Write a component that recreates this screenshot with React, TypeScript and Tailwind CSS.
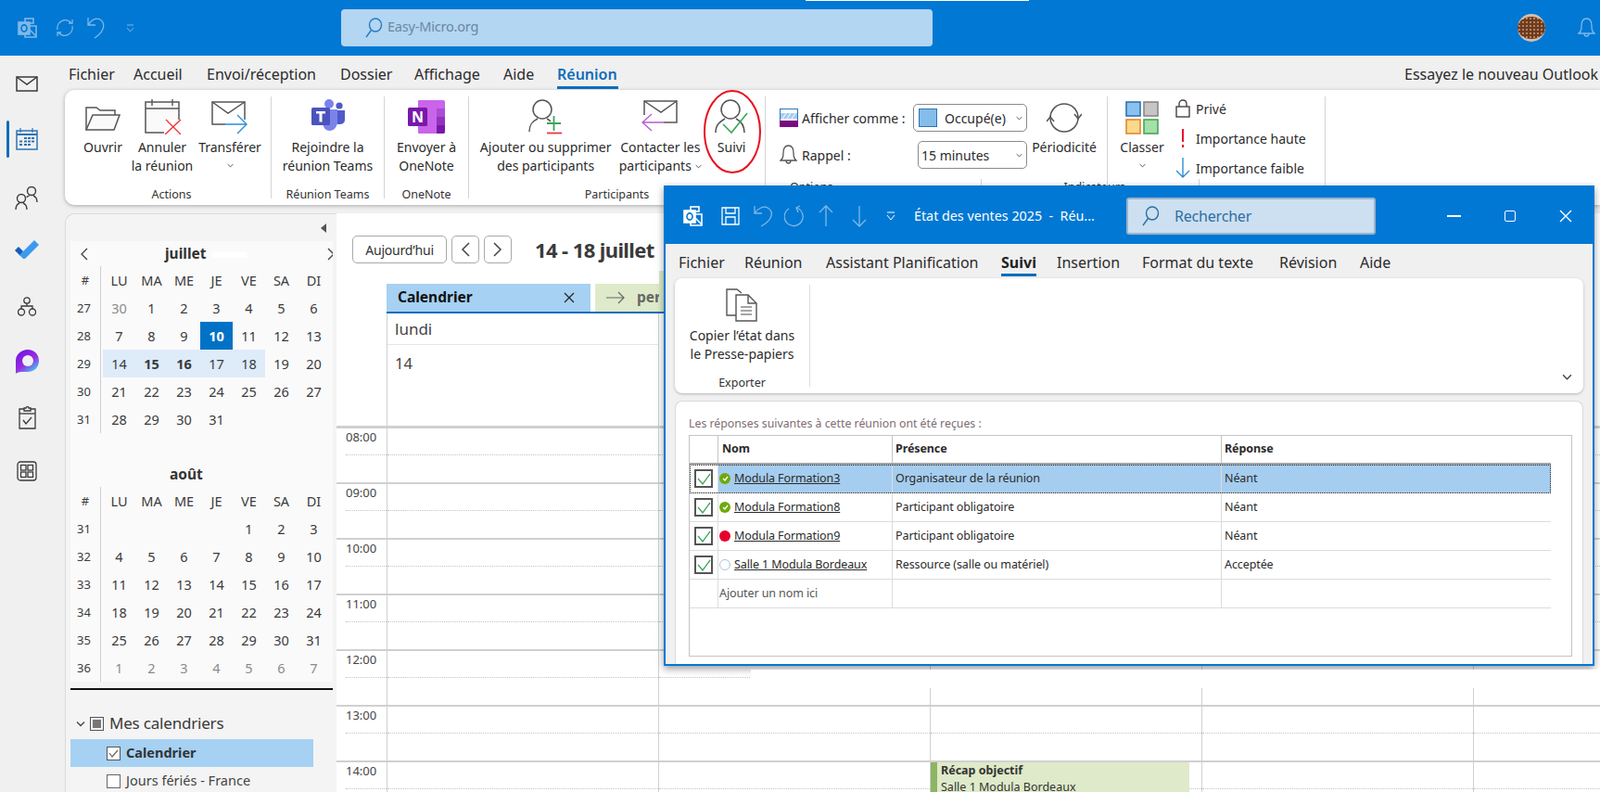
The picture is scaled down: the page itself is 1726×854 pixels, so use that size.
import React from "react";

const S = "#555";

function Chev({ className = "", color = "#444" }: { className?: string; color?: string }) {
  return (
    <svg viewBox="0 0 10 6" className={className} fill="none" stroke={color} strokeWidth="1.3">
      <path d="M1 1 L5 5 L9 1" />
    </svg>
  );
}

function OutlookMini({ color }: { color: string }) {
  return (
    <svg width="22" height="22" viewBox="0 0 22 22" fill="none" stroke={color} strokeWidth="1.6">
      <rect x="8" y="1" width="9" height="5" />
      <rect x="1" y="5" width="12" height="13" fill={color} />
      <ellipse cx="7" cy="11.5" rx="3" ry="3.6" stroke="#0078d4" strokeWidth="1.6" fill="none" />
      <path d="M13 9 L20 9 L20 21 L8 21 L8 18" />
      <path d="M13 13 L20 20" />
    </svg>
  );
}

function SearchIcon({ color }: { color: string }) {
  return (
    <svg width="20" height="22" viewBox="0 0 20 22" fill="none" stroke={color} strokeWidth="1.4">
      <ellipse cx="12" cy="8" rx="6.5" ry="7" />
      <path d="M7.5 13.5 L2 21" />
    </svg>
  );
}

function Folder() {
  return (
    <svg width="38" height="26" viewBox="0 0 38 26" fill="none" stroke={S} strokeWidth="1.5">
      <path d="M1 25 V1 H12 L16 4 H32 V9" />
      <path d="M1 25 L8 9 H37 L31 25 Z" fill="#fafafa" />
    </svg>
  );
}

function CancelCal() {
  return (
    <svg width="40" height="38" viewBox="0 0 40 38" fill="none">
      <rect x="2" y="3" width="36" height="33" stroke={S} strokeWidth="1.5" fill="#fafafa" />
      <path d="M2 10 H38 M9 0 V7 M31 0 V7" stroke={S} strokeWidth="1.4" />
      <rect x="22" y="22" width="18" height="16" fill="#fff" />
      <path d="M23 38 L40 22 M24 22 L40 38" stroke="#f0343a" strokeWidth="1.4" />
    </svg>
  );
}

function ForwardMail() {
  return (
    <svg width="40" height="36" viewBox="0 0 40 36" fill="none">
      <path d="M15 25 H1 V1 H36 V20" stroke={S} strokeWidth="1.5" />
      <path d="M1 1 L18 13 L36 1" stroke={S} strokeWidth="1.5" />
      <path d="M15 25 H38 M28 15 L38 25 L28 35" stroke="#2a8ed8" strokeWidth="1.4" />
    </svg>
  );
}

function Teams() {
  return (
    <svg width="36" height="34" viewBox="0 0 36 34">
      <circle cx="19" cy="5" r="5" fill="#7b83eb" />
      <circle cx="30" cy="7" r="3.6" fill="#5059c9" />
      <path d="M24 12 H36 V22 C36 26 33 27 30 27 C27 27 24 26 24 22 Z" fill="#5059c9" />
      <path d="M12 11 H28 V24 C28 30 24 34 19.500 34 C15 34 12 30 12 24 Z" fill="#7b83eb" />
      <rect x="0" y="9" width="20" height="19" rx="1.500" fill="#4b53bc" />
      <path d="M5 13 H15 V15.500 H11.500 V24.500 H8.500 V15.500 H5 Z" fill="#fff" />
    </svg>
  );
}

function OneNote() {
  return (
    <svg width="40" height="36" viewBox="0 0 40 36">
      <path d="M11 1 Q11 0 12 0 H38 Q40 0 40 2 V34 Q40 36 38 36 H12 Q11 36 11 35 Z" fill="#ca64ea" />
      <rect x="31" y="9" width="9" height="9" fill="#ae4bd5" />
      <rect x="31" y="18" width="9" height="9" fill="#9332bf" />
      <path d="M31 27 H40 V34 Q40 36 38 36 H31 Z" fill="#7719aa" />
      <rect x="0" y="8" width="21" height="20" rx="1.500" fill="#7719aa" />
      <text x="10.500" y="24" textAnchor="middle" fontFamily="Open Sans" fontWeight="700" fontSize="16" fill="#fff">N</text>
    </svg>
  );
}

function PersonPlus() {
  return (
    <svg width="38" height="38" viewBox="0 0 38 38" fill="none">
      <circle cx="15" cy="11" r="10" stroke={S} strokeWidth="1.5" />
      <path d="M1 35 C1 26 6 23 10 21 M20 21 C22 22 23 23 24 24" stroke={S} strokeWidth="1.5" />
      <path d="M20 26 H35 M27.500 18 V34" stroke="#3aa655" strokeWidth="1.8" />
      <path d="M20 36.500 H36" stroke="#f0343a" strokeWidth="1.8" />
    </svg>
  );
}

function BackMail() {
  return (
    <svg width="40" height="34" viewBox="0 0 40 34" fill="none">
      <path d="M3 16 V1 H38 V24 H24" stroke={S} strokeWidth="1.5" />
      <path d="M3 1 L21 13 L38 1" stroke={S} strokeWidth="1.5" />
      <path d="M24 24 H2 M11 15 L1 24 L11 33" stroke="#b45fd0" strokeWidth="1.4" />
    </svg>
  );
}

function PersonCheck() {
  return (
    <svg width="38" height="38" viewBox="0 0 38 38" fill="none">
      <circle cx="18" cy="11" r="10" stroke={S} strokeWidth="1.5" />
      <path d="M2 36 C2 27 7 24 12 21 M24 21 C30 24 33 28 33 36" stroke={S} strokeWidth="1.5" />
      <path d="M10 27 L19 36 L36 15" stroke="#3aa655" strokeWidth="1.6" />
    </svg>
  );
}

function BarIcon() {
  return (
    <svg width="20" height="20" viewBox="0 0 20 20">
      <rect x="0.500" y="0.500" width="19" height="19" fill="#fff" stroke="#2e74b5" />
      <rect x="1" y="5" width="18" height="6" fill="#a6cdee" />
      <path d="M3 11 L7 5 M8 11 L12 5 M13 11 L17 5" stroke="#fff" />
      <rect x="0" y="13" width="20" height="7" fill="#7b0a82" />
    </svg>
  );
}

function Bell({ color = S }: { color?: string }) {
  return (
    <svg width="19" height="22" viewBox="0 0 19 22" fill="none" stroke={color} strokeWidth="1.3">
      <path d="M1 17 C3 15 4 14 4 9 C4 4 6 1 9.500 1 C13 1 15 4 15 9 C15 14 16 15 18 17 Z" />
      <path d="M7 17 C7 21 12 21 12 17" />
    </svg>
  );
}

function Recur() {
  return (
    <svg width="38" height="34" viewBox="0 0 38 34" fill="none" stroke={S} strokeWidth="1.5">
      <path d="M4 17 A15 15 0 0 1 34 17" />
      <path d="M34 17 A15 15 0 0 1 4 17" />
      <path d="M0 21 L4 16 L8 21" />
      <path d="M30 13 L34 18 L38 13" />
    </svg>
  );
}

function Classify() {
  return (
    <svg width="36" height="36" viewBox="0 0 36 36">
      <rect x="1" y="1" width="15" height="15" fill="#8cc1ee" stroke="#2e74b5" strokeWidth="1.6" />
      <rect x="20" y="1" width="15" height="15" fill="#c8c6c4" stroke="#8a8886" strokeWidth="1.6" />
      <rect x="1" y="20" width="15" height="15" fill="#fbd98b" stroke="#e3872a" strokeWidth="1.6" />
      <rect x="20" y="20" width="15" height="15" fill="#a4e0a8" stroke="#4ca35a" strokeWidth="1.6" />
    </svg>
  );
}

function Lock() {
  return (
    <svg width="16" height="20" viewBox="0 0 16 20" fill="none" stroke="#444" strokeWidth="1.4">
      <rect x="1" y="8" width="14" height="11" />
      <path d="M4 8 V5 C4 -0.300 12 -0.300 12 5 V8" />
    </svg>
  );
}

function Exclaim() {
  return (
    <svg width="4" height="20" viewBox="0 0 4 20">
      <rect x="1" y="0" width="2" height="14" fill="#e8112d" />
      <rect x="1" y="17" width="2" height="3" fill="#e8112d" />
    </svg>
  );
}

function DownArrow() {
  return (
    <svg width="16" height="22" viewBox="0 0 16 22" fill="none" stroke="#2a8ed8" strokeWidth="1.4">
      <path d="M8 0 V21 M1 14 L8 21 L15 14" />
    </svg>
  );
}

function CopyDoc() {
  return (
    <svg width="36" height="36" viewBox="0 0 36 36" fill="none" stroke={S} strokeWidth="1.4">
      <path d="M11 29 H1 V1 H12 L17 5" />
      <path d="M11 7 H24 L33 16 V35 H11 Z" fill="#fff" />
      <path d="M24 7 V16 H33" />
      <path d="M16 20 H28 M16 24 H28 M16 28 H28" stroke="#888" />
    </svg>
  );
}

function MailRail() {
  return (
    <svg width="24" height="17" viewBox="0 0 24 17" fill="none" stroke="#3a3a3a" strokeWidth="1.500">
      <rect x="1" y="1" width="22" height="15" />
      <path d="M1 1 L12 9 L23 1" />
    </svg>
  );
}

function CalRail() {
  return (
    <svg width="24" height="24" viewBox="0 0 24 24" fill="none">
      <rect x="1" y="3" width="22" height="20" stroke="#2e74b5" strokeWidth="1.500" fill="#f0f0f0" />
      <path d="M1 7 H23" stroke="#2e74b5" strokeWidth="2" />
      <path d="M5 0 V5 M18 0 V5" stroke="#2e74b5" strokeWidth="1.200" />
      <path d="M9 10 h3 v2 h-3 z M13 10 h3 v2 h-3 z M17 10 h3 v2 h-3 z M4 13.500 h3 v2 h-3 z M9 13.500 h3 v2 h-3 z M13 13.500 h3 v2 h-3 z M17 13.500 h3 v2 h-3 z M4 17 h3 v2 h-3 z M9 17 h3 v2 h-3 z M13 17 h3 v2 h-3 z" fill="#2e74b5" />
    </svg>
  );
}

function PeopleRail() {
  return (
    <svg width="26" height="25" viewBox="0 0 26 25" fill="none" stroke="#3a3a3a" strokeWidth="1.400">
      <circle cx="7" cy="13" r="4.500" />
      <path d="M1 25 C1 20 3 19 5 18 M9 18 C11 19 13 20 13 25" />
      <circle cx="18" cy="5" r="4.500" />
      <path d="M13 12 C13 11 14 11 15.500 10 M20 10 C22 11 24 12 24 17" />
    </svg>
  );
}

function TodoRail() {
  return (
    <svg width="26" height="20" viewBox="0 0 26 20">
      <path d="M0 11 L4 7 L9 12 L6 17 Z" fill="#185abd" />
      <path d="M5 16 L21 0 L26 5 L11 20 L9 20 Z" fill="#3b9af0" />
    </svg>
  );
}

function OrgRail() {
  return (
    <svg width="20" height="21" viewBox="0 0 20 21" fill="none" stroke="#3a3a3a" strokeWidth="1.300">
      <circle cx="10" cy="4" r="3.200" />
      <circle cx="4" cy="16.500" r="3.500" />
      <circle cx="16" cy="16.500" r="3.500" />
      <path d="M10 7 V10 M4 13 V10 H16 V13" />
    </svg>
  );
}

function LoopRail() {
  return (
    <svg width="25" height="26" viewBox="0 0 25 26">
      <defs>
        <linearGradient id="lg" x1="0" y1="0" x2="0.700" y2="1">
          <stop offset="0" stopColor="#6a0fe0" />
          <stop offset="0.6" stopColor="#9a2be2" />
          <stop offset="1" stopColor="#3dd0f5" />
        </linearGradient>
      </defs>
      <path d="M0 26 V12 C0 5 6 0 13 0 C20 0 25 5 25 12 C25 19 20 24 13 24 H6 C3 24 1 25 0 26 Z" fill="url(#lg)" />
      <circle cx="13" cy="12" r="6" fill="#f0f0f0" />
    </svg>
  );
}

function ClipRail() {
  return (
    <svg width="19" height="25" viewBox="0 0 19 25" fill="none" stroke="#3a3a3a" strokeWidth="1.300">
      <path d="M6 3 H1 V24 H18 V3 H13" />
      <path d="M6 5 V2 H8 C8 0 11 0 11 2 H13 V5 H6 Z" />
      <path d="M1 8 H18" />
      <path d="M5 15 L8 19 L14 12" />
    </svg>
  );
}

function AppsRail() {
  return (
    <svg width="22" height="22" viewBox="0 0 22 22" fill="none" stroke="#3a3a3a" strokeWidth="1.300">
      <rect x="1" y="1" width="20" height="20" rx="3" />
      <rect x="4.500" y="4.500" width="5.500" height="5.500" />
      <rect x="12" y="4.500" width="5.500" height="5.500" />
      <rect x="4.500" y="12" width="5.500" height="5.500" />
      <rect x="12" y="12" width="5.500" height="5.500" />
    </svg>
  );
}

function RibbonBtn({ w, icon, lines }: { w: string; icon: React.ReactNode; lines: string[] }) {
  return (
    <div className={`flex flex-col items-center ${w}`}>
      <div className="h-[41px] flex items-end justify-center">{icon}</div>
      <div className="mt-[4px] text-center leading-[20px] whitespace-nowrap">
        {lines.map((l) => (
          <div key={l}>{l}</div>
        ))}
      </div>
    </div>
  );
}

function Group({ w, label, children }: { w: string; label: React.ReactNode; children: React.ReactNode }) {
  return (
    <div className={`flex flex-col border-r border-[#d4d4d4] h-[110px] ${w}`}>
      <div className="flex-1 flex">{children}</div>
      {label}
    </div>
  );
}

function GLabel({ t }: { t: string }) {
  return <div className="h-[18px] leading-[18px] text-center text-[12.5px] text-[#333] -mb-[5px]">{t}</div>;
}

function Select({ w, children }: { w: string; children: React.ReactNode }) {
  return (
    <div className={`${w} h-[30px] flex items-center border border-[#8a8a8a] rounded-[5px] bg-white pl-[3px] pr-[4px]`}>
      {children}
      <Chev className="w-[7px] h-[5px] ml-auto" />
    </div>
  );
}

function Ribbon() {
  return (
    <div className="h-[124px] bg-white rounded-l-[10px] shadow-[0_1px_4px_rgba(0,0,0,0.3)] flex py-[7px] pl-[8px] text-[14px] text-[#2b2b2b]">
      <Group w="w-[215px]" label={<GLabel t="Actions" />}>
        <RibbonBtn w="w-[66px]" icon={<div className="pb-[4px]"><Folder /></div>} lines={["Ouvrir"]} />
        <RibbonBtn w="w-[62px]" icon={<CancelCal />} lines={["Annuler", "la réunion"]} />
        <div className="flex flex-col items-center w-[84px]">
          <div className="h-[41px] flex items-end justify-center"><ForwardMail /></div>
          <div className="mt-[4px] leading-[20px]">Transférer</div>
          <Chev className="w-[7px] h-[5px] mt-[7px]" />
        </div>
      </Group>
      <Group w="w-[122px]" label={<GLabel t="Réunion Teams" />}>
        <RibbonBtn w="w-full" icon={<div className="pb-[4px]"><Teams /></div>} lines={["Rejoindre la", "réunion Teams"]} />
      </Group>
      <Group w="w-[91px]" label={<GLabel t="OneNote" />}>
        <RibbonBtn w="w-full" icon={<div className="pb-[1px]"><OneNote /></div>} lines={["Envoyer à", "OneNote"]} />
      </Group>
      <Group w="w-[320px]" label={<GLabel t="Participants" />}>
        <RibbonBtn w="w-[166px]" icon={<PersonPlus />} lines={["Ajouter ou supprimer", "des participants"]} />
        <div className="flex flex-col items-center w-[82px]">
          <div className="h-[41px] flex items-end justify-center pb-[3px]"><BackMail /></div>
          <div className="mt-[4px] leading-[20px] whitespace-nowrap">Contacter les</div>
          <div className="leading-[20px] whitespace-nowrap flex items-center gap-[4px]">participants<Chev className="w-[7px] h-[5px]" /></div>
        </div>
        <RibbonBtn w="w-[72px]" icon={<PersonCheck />} lines={["Suivi"]} />
      </Group>
      <Group
        w="w-[369px]"
        label={
          <div className="h-[18px] mb-[3px] leading-[18px] text-[12.5px] text-[#333] flex pl-[26px]">
            <span>Options</span>
            <span className="ml-[249px]">Indicateurs</span>
          </div>
        }
      >
        <div className="w-[283px] pl-[15px] pt-[8px] flex flex-col gap-[10px]">
          <div className="flex items-center h-[30px]">
            <BarIcon />
            <span className="w-[124px] pl-[4px] whitespace-nowrap">Afficher comme :</span>
            <Select w="w-[123px]">
              <span className="w-[20px] h-[20px] bg-[#84bdea] border border-[#2e74b5] ml-[2px] mr-[8px]" />
              Occupé(e)
            </Select>
          </div>
          <div className="flex items-center h-[30px]">
            <Bell />
            <span className="w-[130px] pl-[5px]">Rappel :</span>
            <Select w="w-[118px]">15 minutes</Select>
          </div>
        </div>
        <div className="w-[78px] flex flex-col items-center">
          <div className="h-[41px] flex items-end justify-center pb-[1px]"><Recur /></div>
          <div className="mt-[4px] leading-[20px]">Périodicité</div>
        </div>
      </Group>
      <Group w="w-[235px]" label={null}>
        <div className="w-[74px] flex flex-col items-center">
          <div className="h-[41px] flex items-end justify-center"><Classify /></div>
          <div className="mt-[4px] leading-[20px]">Classer</div>
          <Chev className="w-[7px] h-[5px] mt-[7px]" />
        </div>
        <div className="-mt-[3px] -ml-[7px] flex flex-col">
          {[
            { t: "Privé", i: <Lock /> },
            { t: "Importance haute", i: <Exclaim /> },
            { t: "Importance faible", i: <DownArrow /> },
          ].map((r) => (
            <div key={r.t} className="h-[32px] flex items-center">
              <span className="w-[28px] flex justify-center">{r.i}</span>
              <span className="whitespace-nowrap">{r.t}</span>
            </div>
          ))}
        </div>
      </Group>
    </div>
  );
}

type Week = { n: number; days: { t: string; cls?: string }[] };

const w = (n: number, list: (number | null)[], muted: number[] = []): Week => ({
  n,
  days: list.map((d, i) => ({ t: d === null ? "" : String(d), cls: muted.includes(i) ? "text-[#8a8a8a]" : "" })),
});

const JUL: Week[] = [
  w(27, [30, 1, 2, 3, 4, 5, 6], [0]),
  {
    n: 28,
    days: [
      { t: "7" }, { t: "8" }, { t: "9" },
      { t: "10", cls: "bg-[#0072c6] text-white font-bold" },
      { t: "11" }, { t: "12" }, { t: "13" },
    ],
  },
  {
    n: 29,
    days: [
      { t: "14", cls: "bg-[#deebf9]" },
      { t: "15", cls: "bg-[#deebf9] font-bold" },
      { t: "16", cls: "bg-[#deebf9] font-bold" },
      { t: "17", cls: "bg-[#deebf9]" },
      { t: "18", cls: "bg-[#deebf9]" },
      { t: "19" }, { t: "20" },
    ],
  },
  w(30, [21, 22, 23, 24, 25, 26, 27]),
  w(31, [28, 29, 30, 31, null, null, null]),
];

const AUG: Week[] = [
  w(31, [null, null, null, null, 1, 2, 3]),
  w(32, [4, 5, 6, 7, 8, 9, 10]),
  w(33, [11, 12, 13, 14, 15, 16, 17]),
  w(34, [18, 19, 20, 21, 22, 23, 24]),
  w(35, [25, 26, 27, 28, 29, 30, 31]),
  w(36, [1, 2, 3, 4, 5, 6, 7], [0, 1, 2, 3, 4, 5, 6]),
];

function Month({ weeks }: { weeks: Week[] }) {
  return (
    <div className="flex text-[14.5px] text-[#3b3b3b]">
      <div className="w-[33px] border-r border-[#cfcfcf] text-[13px]">
        <div className="h-[30px] pt-[1px] flex items-center justify-center">#</div>
        {weeks.map((k) => (
          <div key={k.n} className="h-[30px] pt-[2px] flex items-center justify-center pr-[3px]">{k.n}</div>
        ))}
      </div>
      <div className="ml-[2px]">
        <div className="flex h-[30px]">
          {["LU", "MA", "ME", "JE", "VE", "SA", "DI"].map((d) => (
            <div key={d} className="w-[35px] pt-[1px] flex items-center justify-center">{d}</div>
          ))}
        </div>
        {weeks.map((k) => (
          <div key={k.n} className="flex h-[30px]">
            {k.days.map((d, i) => (
              <div key={i} className={`w-[35px] pt-[1px] flex items-center justify-center ${d.cls ?? ""}`}>{d.t}</div>
            ))}
          </div>
        ))}
      </div>
    </div>
  );
}

function Sidebar() {
  return (
    <div className="w-[293px] shrink-0 bg-[#f4f4f4] border-l border-t border-[#dadada] rounded-tl-[10px] pl-[5px] pr-[4px] relative">
      <div className="h-[29px] flex justify-end items-center pr-[7px]">
        <svg width="6" height="10" viewBox="0 0 6 10"><path d="M6 0 V10 L0 5 Z" fill="#555" /></svg>
      </div>
      <div className="bg-[#fafafa] h-[475px] overflow-hidden">
        <div className="h-[27px] pt-[1px] flex items-center relative">
          <svg width="9" height="14" viewBox="0 0 9 14" fill="none" stroke="#444" strokeWidth="1.400" className="absolute left-[10px] top-[7px]"><path d="M8 1 L2 7 L8 13" /></svg>
          <span className="ml-[102px] font-bold text-[15.5px] text-[#333]">juillet</span>
          <span className="ml-[6px] w-[38px] h-[7px] bg-white blur-[1px]" />
          <svg width="9" height="14" viewBox="0 0 9 14" fill="none" stroke="#444" strokeWidth="1.400" className="absolute left-[277px] top-[7px]"><path d="M1 1 L7 7 L1 13" /></svg>
        </div>
        <Month weeks={JUL} />
        <div className="h-[58px] pt-[30px] pl-[107px] font-bold text-[15.5px] text-[#333] leading-[28px]">août</div>
        <Month weeks={AUG} />
      </div>
      <div className="mt-[7px] h-[2px] bg-[#111]" />
      <div className="mt-[21px] h-[30px] flex items-center text-[17px] text-[#3a3a3a] tracking-[-0.2px]">
        <Chev className="w-[10px] h-[7px] ml-[6px]" />
        <span className="w-[15px] h-[15px] border border-[#555] ml-[5px] mr-[6px] flex items-center justify-center">
          <span className="w-[9px] h-[9px] bg-[#777]" />
        </span>
        Mes calendriers
      </div>
      <div className="mt-[2px] w-[262px] h-[30px] bg-[#a6d1f3] flex items-center pl-[39px] text-[14.5px] font-bold text-[#333]">
        <span className="w-[15px] h-[15px] border border-[#555] bg-white mr-[6px] flex items-center justify-center">
          <svg width="11" height="9" viewBox="0 0 11 9" fill="none" stroke="#666" strokeWidth="1.200"><path d="M1 4 L4 8 L10 1" /></svg>
        </span>
        Calendrier
      </div>
      <div className="h-[30px] flex items-center pl-[39px] text-[14.5px] text-[#444]">
        <span className="w-[15px] h-[15px] border border-[#666] bg-white mr-[6px]" />
        Jours fériés - France
      </div>
    </div>
  );
}

function Nav({ children, w: wc }: { children: React.ReactNode; w: string }) {
  return (
    <div className={`${wc} h-[30px] border border-[#a9a9a9] rounded-[5px] flex items-center justify-center text-[14px] text-[#333] tracking-[-0.2px]`}>
      {children}
    </div>
  );
}

function HourRow({ t, children }: { t: string; children?: React.ReactNode }) {
  return (
    <div className="h-[60px] border-t-2 border-[#d0d0d0] flex relative text-[13px] text-[#444]">
      <div className="w-[54px] shrink-0 pl-[10px] leading-[18px] relative">
        {t}
        <div className="absolute left-[10px] right-0 top-[28px] border-t border-dotted border-[#c4c4c4]" />
      </div>
      {[0, 1, 2, 3, 4].map((i) => (
        <div key={i} className="w-[293px] shrink-0 border-l border-[#d0d0d0] relative">
          <div className="absolute inset-x-0 top-[28px] border-t border-dotted border-[#c4c4c4]" />
          {i === 2 && children}
        </div>
      ))}
    </div>
  );
}

function CalendarView() {
  return (
    <div className="flex-1 bg-white min-w-0 overflow-hidden">
      <div className="h-[76px] pl-[17px] pt-[24px] flex items-start gap-[5px]">
        <Nav w="w-[102px]">Aujourd’hui</Nav>
        <Nav w="w-[30px]"><svg width="10" height="16" viewBox="0 0 10 16" fill="none" stroke="#444" strokeWidth="1.500"><path d="M9 1 L2 8 L9 15" /></svg></Nav>
        <Nav w="w-[30px]"><svg width="10" height="16" viewBox="0 0 10 16" fill="none" stroke="#444" strokeWidth="1.500"><path d="M1 1 L8 8 L1 15" /></svg></Nav>
        <span className="ml-[20px] text-[22px] font-bold text-[#3a3a3a] leading-[30px] tracking-[-0.6px]">14 - 18 juillet</span>
      </div>
      <div className="ml-[54px] flex h-[30px] border-b-2 border-[#0f6cbd] w-[299px] box-content">
        <div className="w-[220px] bg-[#a6d1f3] flex items-center pl-[12px] text-[15.5px] font-bold text-[#111]">
          Calendrier
          <svg width="12" height="12" viewBox="0 0 12 12" fill="none" stroke="#222" strokeWidth="1.200" className="ml-auto mr-[17px]"><path d="M1 1 L11 11 M11 1 L1 11" /></svg>
        </div>
        <div className="ml-[5px] w-[69px] bg-[#deeac9] flex items-center pl-[12px] overflow-hidden text-[15.5px] font-bold text-[#666] whitespace-nowrap">
          <svg width="20" height="14" viewBox="0 0 20 14" fill="none" stroke="#666" strokeWidth="1.200" className="shrink-0 mr-[13px]"><path d="M0 7 H19 M13 1 L19 7 L13 13" /></svg>
          per
        </div>
      </div>
      <div className="ml-[54px] w-[294px] h-[121px] border-x border-[#d0d0d0]">
        <div className="h-[34px] pl-[8px] flex items-center text-[17px] text-[#444] border-b border-[#e6e6e6]">lundi</div>
        <div className="pl-[8px] pt-[8px] text-[16.5px] text-[#444] leading-[24px]">14</div>
      </div>
      <div className="border-t border-[#d0d0d0]">
        <HourRow t="08:00" />
        <HourRow t="09:00" />
        <HourRow t="10:00" />
        <HourRow t="11:00" />
        <HourRow t="12:00" />
        <HourRow t="13:00" />
        <HourRow t="14:00">
          <div className="absolute left-0 top-0 w-[279px] h-[60px] bg-[#deeac9] border-l-[7px] border-[#8db465] pl-[4px] text-[12.5px] leading-[18px] text-[#333]">
            <div className="font-bold">Récap objectif</div>
            <div>Salle 1 Modula Bordeaux</div>
          </div>
        </HourRow>
      </div>
    </div>
  );
}

const GUESTS = [
  { n: "Modula Formation3", p: "Organisateur de la réunion", r: "Néant", s: "ok", sel: true },
  { n: "Modula Formation8", p: "Participant obligatoire", r: "Néant", s: "ok" },
  { n: "Modula Formation9", p: "Participant obligatoire", r: "Néant", s: "busy" },
  { n: "Salle 1 Modula Bordeaux", p: "Ressource (salle ou matériel)", r: "Acceptée", s: "free" },
];

function Status({ s }: { s: string }) {
  if (s === "ok")
    return (
      <span className="w-[12px] h-[12px] rounded-full bg-[#6ea90d] flex items-center justify-center shrink-0">
        <svg width="7" height="6" viewBox="0 0 7 6" fill="none" stroke="#fff" strokeWidth="1.300"><path d="M1 3 L3 5 L6 1" /></svg>
      </span>
    );
  if (s === "busy") return <span className="w-[12px] h-[12px] rounded-full bg-[#e8002a] shrink-0" />;
  return <span className="w-[12px] h-[12px] rounded-full border border-[#a9c5d8] bg-white shrink-0" />;
}

function CheckBox() {
  return (
    <span className="w-[20px] h-[20px] border-2 border-[#555] bg-white flex items-center justify-center">
      <svg width="15" height="13" viewBox="0 0 15 13" fill="none" stroke="#3aa655" strokeWidth="1.300"><path d="M1 6 L6 12 L14 1" /></svg>
    </span>
  );
}

function Dialog() {
  return (
    <div className="absolute left-[716px] top-[200px] w-[1004px] h-[518px] border-2 border-[#0078d4] bg-[#f0f0f0] shadow-[0_3px_8px_rgba(0,0,0,0.4)] flex flex-col overflow-hidden text-[#222]">
      <div className="h-[61px] shrink-0 bg-[#0078d4] flex items-center text-white">
        <div className="ml-[19px]"><OutlookMini color="#fff" /></div>
        <svg width="20" height="20" viewBox="0 0 20 20" fill="none" stroke="#fff" strokeWidth="1.300" className="ml-[19px]">
          <path d="M1 1 H19 V19 H1 Z M5 1 V7 H15 V1 M5 19 V11 H15 V19" />
        </svg>
        <svg width="22" height="24" viewBox="0 0 22 24" fill="none" stroke="#7fb8e8" strokeWidth="1.300" className="ml-[15px]">
          <path d="M1 1 V9 H9 M1 9 C5 3 11 1 15 3 C22 7 21 16 8 23" />
        </svg>
        <svg width="22" height="24" viewBox="0 0 22 24" fill="none" stroke="#7fb8e8" strokeWidth="1.300" className="ml-[11px]">
          <path d="M13 3 A10 10 0 1 1 5 4 M17 1 L13 3 L15 8" />
        </svg>
        <svg width="16" height="24" viewBox="0 0 16 24" fill="none" stroke="#7fb8e8" strokeWidth="1.300" className="ml-[15px]">
          <path d="M8 23 V1 M1 8 L8 1 L15 8" />
        </svg>
        <svg width="16" height="24" viewBox="0 0 16 24" fill="none" stroke="#7fb8e8" strokeWidth="1.300" className="ml-[20px]">
          <path d="M8 1 V23 M1 16 L8 23 L15 16" />
        </svg>
        <svg width="10" height="10" viewBox="0 0 10 10" fill="none" stroke="#fff" className="ml-[21px]">
          <path d="M1 1 H9 M1 4 L5 9 L9 4" />
        </svg>
        <span className="ml-[20px] w-[229px] text-[14.3px] whitespace-pre">État des ventes 2025  -  Réu...</span>
        <div className="w-[269px] h-[40px] bg-[#cce0f2] border-2 border-[#9ab3c9] rounded-[3px] flex items-center pl-[14px]">
          <SearchIcon color="#2d6fa3" />
          <span className="ml-[16px] text-[16px] text-[#2d6fa3] tracking-[-0.2px]">Rechercher</span>
        </div>
        <span className="ml-[77px] w-[15px] h-[2px] bg-white" />
        <span className="ml-[47px] w-[12px] h-[12px] border-[1.5px] border-white rounded-[2px]" />
        <svg width="14" height="14" viewBox="0 0 14 14" fill="none" stroke="#fff" strokeWidth="1.400" className="ml-[47px]">
          <path d="M1 1 L13 13 M13 1 L1 13" />
        </svg>
      </div>
      <div className="h-[37px] pt-[3px] shrink-0 flex items-center pl-[14px] text-[16px] text-[#2b2b2b]">
        {[
          ["Fichier", "w-[71px]"],
          ["Réunion", "w-[88px]"],
          ["Assistant Planification", "w-[189px]"],
        ].map(([t, c]) => (
          <span key={t} className={`${c} whitespace-nowrap`}>{t}</span>
        ))}
        <span className="w-[60px] relative font-bold text-[#222]">
          Suivi
          <span className="absolute left-0 w-[38px] top-[24px] h-[3px] bg-[#0f6cbd]" />
        </span>
        {[
          ["Insertion", "w-[92px]"],
          ["Format du texte", "w-[148px]"],
          ["Révision", "w-[87px]"],
          ["Aide", "w-[40px]"],
        ].map(([t, c]) => (
          <span key={t} className={`${c} whitespace-nowrap`}>{t}</span>
        ))}
      </div>
      <div className="ml-[10px] w-[980px] h-[124px] shrink-0 bg-white rounded-[8px] shadow-[0_1px_3px_rgba(0,0,0,0.25)] flex py-[7px] text-[14px] text-[#2b2b2b]">
        <div className="w-[146px] border-r border-[#dcdcdc] flex flex-col items-center relative pt-[4px]">
          <CopyDoc />
          <div className="mt-[5px] text-center leading-[20px]">
            <div>Copier l’état dans</div>
            <div>le Presse-papiers</div>
          </div>
          <div className="absolute bottom-[-6px] text-[12.5px] text-[#333]">Exporter</div>
        </div>
        <div className="flex-1 flex justify-end items-end pr-[12px] pb-[7px]">
          <Chev className="w-[11px] h-[7px]" />
        </div>
      </div>
      <div className="ml-[10px] mt-[8px] w-[980px] flex-1 bg-white rounded-t-[8px] border-t border-x border-[#dadada] pl-[14px] pt-[15px] text-[12.5px] tracking-[-0.1px]">
        <div className="text-[#7d6d72] text-[12.3px] leading-[18px] tracking-[0]">Les réponses suivantes à cette réunion ont été reçues :</div>
        <div className="mt-[3px] w-[953px] h-[239px] border border-[#c4c4c4] text-[#2b2b2b]">
          <div className="flex h-[31px] border-b-2 border-[#a3a3a3] font-bold w-[929px] items-stretch">
            <div className="w-[31px] border-r border-[#c4c4c4]" />
            <div className="w-[188px] border-r border-[#c4c4c4] pl-[4px] flex items-center">Nom</div>
            <div className="w-[355px] border-r border-[#c4c4c4] pl-[3px] flex items-center">Présence</div>
            <div className="flex-1 pl-[3px] flex items-center">Réponse</div>
          </div>
          {GUESTS.map((g) => (
            <div key={g.n} className={`flex h-[31px] w-[929px] border-b border-[#dcdcdc] ${g.sel ? "outline outline-1 outline-dotted outline-[#222] -outline-offset-1" : ""}`}>
              <div className="w-[31px] border-r border-[#dcdcdc] flex items-center justify-center"><CheckBox /></div>
              <div className={`w-[188px] border-r border-[#dcdcdc] pl-[1px] flex items-center gap-[4px] ${g.sel ? "bg-[#a5cdef]" : ""}`}>
                <Status s={g.s} />
                <span className="underline whitespace-nowrap">{g.n}</span>
              </div>
              <div className={`w-[355px] border-r border-[#dcdcdc] pl-[3px] flex items-center ${g.sel ? "bg-[#a5cdef]" : ""}`}>{g.p}</div>
              <div className={`flex-1 pl-[3px] flex items-center ${g.sel ? "bg-[#a5cdef]" : ""}`}>{g.r}</div>
            </div>
          ))}
          <div className="flex h-[31px] w-[929px] border-b border-[#dcdcdc] text-[#555]">
            <div className="w-[31px] border-r border-[#dcdcdc]" />
            <div className="w-[188px] border-r border-[#dcdcdc] pl-[1px] flex items-center">Ajouter un nom ici</div>
            <div className="w-[355px] border-r border-[#dcdcdc]" />
            <div className="flex-1" />
          </div>
        </div>
      </div>
    </div>
  );
}

export default function App() {
  const font = "[font-family:'Open_Sans','Noto_Sans',sans-serif]";
  return (
    <div className={`relative w-[1726px] h-[854px] overflow-hidden bg-[#f0f0f0] ${font}`}>
      <div className="h-[60px] bg-[#0078d4] flex items-center relative">
        <div className="absolute left-[869px] top-0 w-[241px] h-[1px] bg-white" />
        <div className="ml-[19px]"><OutlookMini color="#7fb8e8" /></div>
        <svg width="22" height="24" viewBox="0 0 22 24" fill="none" stroke="#7fb8e8" strokeWidth="1.300" className="ml-[18px]">
          <path d="M3 14 A8.500 8.500 0 0 1 18 7 M19 10 A8.500 8.500 0 0 1 4 17 M15 7 H19 V3 M7 17 H3 V21" />
        </svg>
        <svg width="20" height="24" viewBox="0 0 20 24" fill="none" stroke="#7fb8e8" strokeWidth="1.300" className="ml-[13px]">
          <path d="M1 1 V9 H9 M1 9 C5 3 10 1 14 3 C20 7 19 16 8 23" />
        </svg>
        <svg width="9" height="9" viewBox="0 0 9 9" fill="none" stroke="#7fb8e8" className="ml-[22px]">
          <path d="M1 1 H8 M1 4 L4.500 8 L8 4" />
        </svg>
        <div className="ml-[223px] w-[638px] h-[40px] rounded-[4px] bg-[#b3d6f2] flex items-center pl-[25px]">
          <SearchIcon color="#2a7cc0" />
          <span className="ml-[5px] -mt-[2px] text-[14.5px] text-[#6a87a3] tracking-[-0.2px]">Easy-Micro.org</span>
        </div>
        <div className="ml-[631px] w-[30px] h-[30px] rounded-full bg-[#6b3b22] bg-[radial-gradient(#b98255_1px,transparent_1.5px)] bg-[length:4px_4px] border-y-[3px] border-[#d4bfae]" />
        <div className="ml-[35px]"><Bell color="#7fb8e8" /></div>
      </div>
      <div className="flex h-[794px]">
        <div className="w-[70px] shrink-0 relative">
          <div className="absolute left-[7px] top-[70px] w-[3px] h-[40px] bg-[#0f6cbd] rounded-full" />
          {[
            { c: "", i: <MailRail /> },
            { c: "", i: <CalRail /> },
            { c: "mt-[3px]", i: <PeopleRail /> },
            { c: "-mt-[4px]", i: <TodoRail /> },
            { c: "mt-[1px]", i: <OrgRail /> },
            { c: "", i: <LoopRail /> },
            { c: "", i: <ClipRail /> },
            { c: "-mt-[2px]", i: <AppsRail /> },
          ].map((r, i) => (
            <div key={i} className={`h-[60px] w-[58px] flex items-center justify-center ${r.c}`}>{r.i}</div>
          ))}
        </div>
        <div className="flex-1 min-w-0 flex flex-col">
          <div className="h-[37px] pt-[3px] shrink-0 flex items-center pl-[4px] text-[16px] text-[#2b2b2b]">
            {[
              ["Fichier", "w-[70px]"],
              ["Accueil", "w-[79px]"],
              ["Envoi/réception", "w-[144px]"],
              ["Dossier", "w-[80px]"],
              ["Affichage", "w-[96px]"],
              ["Aide", "w-[58px]"],
            ].map(([t, c]) => (
              <span key={t} className={`${c} whitespace-nowrap`}>{t}</span>
            ))}
            <span className="relative font-semibold text-[#0f6cbd] w-[66px]">
              Réunion
              <span className="absolute left-0 right-0 top-[25px] h-[3px] bg-[#0f6cbd]" />
            </span>
            <span className="ml-auto w-[211px] whitespace-nowrap">Essayez le nouveau Outlook</span>
          </div>
          <Ribbon />
          <div className="h-[9px] shrink-0" />
          <div className="flex flex-1 min-h-0">
            <Sidebar />
            <CalendarView />
          </div>
        </div>
      </div>
      <svg width="64" height="92" viewBox="0 0 64 92" fill="none" className="absolute left-[758px] top-[96px]">
        <ellipse cx="32" cy="46" rx="30" ry="44" stroke="#e8101e" strokeWidth="2" />
      </svg>
      <div className="absolute left-[711px] top-[292px] w-[5px] h-[44px] bg-[#deeac9]" />
      <div className="absolute left-[1058px] top-[193px] w-px h-[7px] bg-[#d4d4d4]" />
      <div className="absolute left-[1293px] top-[193px] w-px h-[7px] bg-[#d4d4d4]" />
      <Dialog />
      <div className="absolute left-[810px] top-[722px] w-[916px] h-[20px] bg-white" />
    </div>
  );
}
